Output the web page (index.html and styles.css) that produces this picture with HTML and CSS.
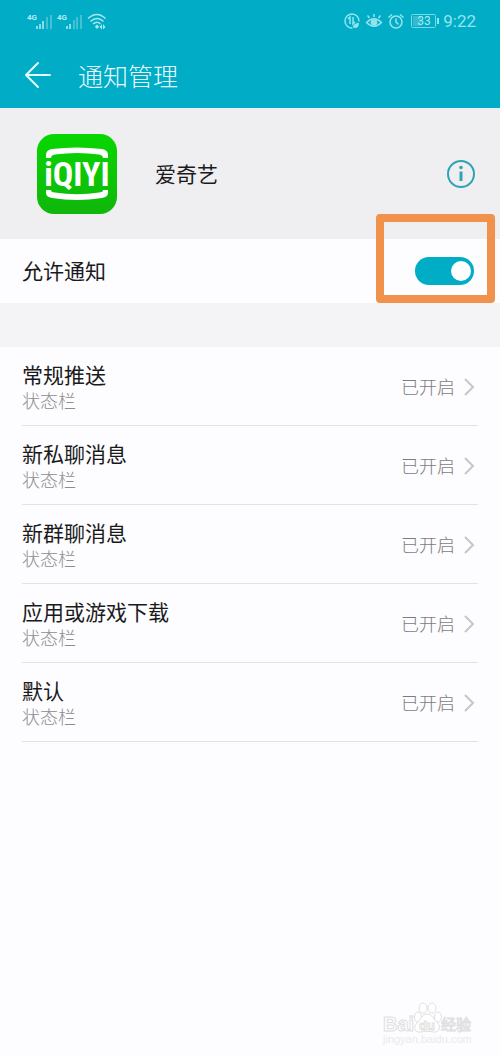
FILE: index.html
```html
<!DOCTYPE html>
<html lang="zh-CN">
<head>
<meta charset="utf-8">
<meta name="viewport" content="width=device-width, initial-scale=1">
<title>通知管理</title>
<link rel="stylesheet" href="styles.css">
</head>
<body>
<div class="screen">
  <header class="header">
    <div class="status-bar">
      <div class="status-left">
        <svg class="signal" width="26" height="18" viewBox="0 0 26 18" aria-hidden="true">
          <text class="net" x="0" y="8">4G</text>
          <path d="M10 17v-3M13 17v-5M16 17v-8" stroke="#b5edf4" stroke-width="1.500"/>
          <path d="M20 17V5M24 17V3" stroke="#45c1d3" stroke-width="2"/>
        </svg>
        <svg class="signal" width="26" height="18" viewBox="0 0 26 18" aria-hidden="true">
          <text class="net" x="0" y="8">4G</text>
          <path d="M10 17v-3M13 17v-5" stroke="#b5edf4" stroke-width="1.500"/>
          <path d="M17 17V8M20 17V5M24 17V3" stroke="#45c1d3" stroke-width="2"/>
        </svg>
        <svg width="20" height="18" viewBox="0 0 20 18" fill="none" stroke="#a5e8f0" stroke-width="1.600" aria-hidden="true">
          <path d="M1 6.500Q10-1.500 18.500 6.500M3.500 9.500Q10 3.500 16.500 9.500M6 12Q10 8.500 13.500 12"/>
          <path d="M10 12.500l2.200 2.200-2.200 2.300-2.200-2.300zM15 12l-2.500 3 2.500 2.500zM16 12l2.500 3-2.500 2.500z" fill="#a5e8f0" stroke="none"/>
        </svg>
      </div>
      <div class="status-right">
        <svg width="18" height="18" viewBox="0 0 18 18" fill="none" stroke="#94e4ee" stroke-width="1.500" aria-hidden="true">
          <path d="M16 9.500A7 7 0 1 0 9.500 16M5 7l2-2v7M10 5v7l2-2"/>
          <path d="M10 15.500c0-3 2.500-4.500 6-4.500 0 4-2.500 6-6 4.500z" fill="#94e4ee" stroke="none"/>
        </svg>
        <svg width="18" height="18" viewBox="0 0 18 18" fill="none" stroke="#94e4ee" stroke-width="1.500" aria-hidden="true">
          <path d="M1.500 10.500Q9 3 16.500 10.500Q9 18 1.500 10.500zM9 5V2M4.500 6L2.500 3.500M13.500 6l2-2.500"/>
          <circle cx="9" cy="10.500" r="2.600" fill="#94e4ee"/>
        </svg>
        <svg width="18" height="18" viewBox="0 0 18 18" fill="none" stroke="#94e4ee" stroke-width="1.600" aria-hidden="true">
          <circle cx="9" cy="10" r="6"/>
          <path d="M9 6.500V10l2.500 2.500M1.500 5.500L5 2.500M16.500 5.500L13 2.500"/>
        </svg>
        <svg class="battery" width="28" height="14" viewBox="0 0 28 14" aria-hidden="true">
          <rect x=".5" y=".5" width="24" height="13" rx="1" fill="none" stroke="#75dbe7"/>
          <rect x="2" y="2" width="8" height="10" fill="#35bace"/>
          <path d="M27 4v6" stroke="#94e4ee" stroke-width="2"/>
          <text class="battery-level" x="13" y="11" text-anchor="middle">33</text>
        </svg>
        <span class="clock">9:22</span>
      </div>
    </div>
    <div class="title-bar">
      <button class="back" type="button" aria-label="返回">
        <svg width="28" height="28" viewBox="0 0 28 28" fill="none" stroke="#e8fbfd" stroke-width="2" stroke-linecap="round" stroke-linejoin="round" aria-hidden="true">
          <path d="M26 14H2M14 2L2 14l12 12"/>
        </svg>
      </button>
      <h1 class="title">通知管理</h1>
    </div>
  </header>

  <main>
    <section class="app">
      <svg class="app-icon" width="80" height="80" viewBox="0 0 80 80" role="img" aria-label="爱奇艺">
        <defs>
          <linearGradient id="green" x1="0" y1="0" x2="0" y2="1">
            <stop offset="0" stop-color="#08d700"/>
            <stop offset="1" stop-color="#10b60c"/>
          </linearGradient>
        </defs>
        <rect width="80" height="80" rx="17" fill="url(#green)"/>
        <path d="M9 24V21Q9 16 15 15Q40 12 65 15Q71 16 71 21V24H66Q66 21 62 20.500Q40 17.500 18 20.500Q14 21 14 24z" fill="#fff"/>
        <path d="M9 56V59Q9 63 15 64Q40 68 65 64Q71 63 71 59V56H66Q66 58 62 58.500Q40 62 18 58.500Q14 58 14 56z" fill="#fff"/>
        <text class="logo-text" x="40" y="52" text-anchor="middle">iQIYI</text>
      </svg>
      <h2 class="app-name">爱奇艺</h2>
      <button class="info" type="button" aria-label="应用信息">
        <svg width="28" height="28" viewBox="0 0 28 28" aria-hidden="true">
          <circle cx="14" cy="14" r="13" fill="none" stroke="#2fa5b4" stroke-width="2"/>
          <circle cx="14" cy="7.500" r="1.800" fill="#2fa5b4"/>
          <path d="M14 11.500v9.500" stroke="#2fa5b4" stroke-width="3"/>
        </svg>
      </button>
    </section>

    <section class="allow">
      <label class="allow-label" for="allow">允许通知</label>
      <input class="switch" id="allow" type="checkbox" role="switch" checked>
      <span class="highlight"></span>
    </section>

    <ul class="channels">
      <li><a class="channel" href="#regular">
        <span class="channel-text"><span class="channel-name">常规推送</span><span class="channel-place">状态栏</span></span>
        <span class="channel-state">已开启</span>
        <svg class="chevron" width="12" height="20" viewBox="0 0 12 20" aria-hidden="true"><path d="M2 1l8 8-8 8"/></svg>
      </a></li>
      <li><a class="channel" href="#private">
        <span class="channel-text"><span class="channel-name">新私聊消息</span><span class="channel-place">状态栏</span></span>
        <span class="channel-state">已开启</span>
        <svg class="chevron" width="12" height="20" viewBox="0 0 12 20" aria-hidden="true"><path d="M2 1l8 8-8 8"/></svg>
      </a></li>
      <li><a class="channel" href="#group">
        <span class="channel-text"><span class="channel-name">新群聊消息</span><span class="channel-place">状态栏</span></span>
        <span class="channel-state">已开启</span>
        <svg class="chevron" width="12" height="20" viewBox="0 0 12 20" aria-hidden="true"><path d="M2 1l8 8-8 8"/></svg>
      </a></li>
      <li><a class="channel" href="#download">
        <span class="channel-text"><span class="channel-name">应用或游戏下载</span><span class="channel-place">状态栏</span></span>
        <span class="channel-state">已开启</span>
        <svg class="chevron" width="12" height="20" viewBox="0 0 12 20" aria-hidden="true"><path d="M2 1l8 8-8 8"/></svg>
      </a></li>
      <li><a class="channel" href="#default">
        <span class="channel-text"><span class="channel-name">默认</span><span class="channel-place">状态栏</span></span>
        <span class="channel-state">已开启</span>
        <svg class="chevron" width="12" height="20" viewBox="0 0 12 20" aria-hidden="true"><path d="M2 1l8 8-8 8"/></svg>
      </a></li>
    </ul>
  </main>

  <svg class="watermark" width="96" height="48" viewBox="0 0 96 48" role="img" aria-label="Baidu 经验 jingyan.baidu.com">
    <text class="mark-latin" x="1" y="31">Bai</text>
    <g fill="#fff" stroke="#e0dfe1">
      <ellipse cx="36" cy="17" rx="3.500" ry="5"/>
      <ellipse cx="41" cy="8" rx="4" ry="5"/>
      <ellipse cx="50" cy="8" rx="4" ry="5"/>
      <ellipse cx="56" cy="17" rx="3.500" ry="5"/>
      <path d="M45 14c-5 0-6 5-9 8-6 5-3 11 3 10 4-1 8-1 12 0 6 1 9-5 4-10-4-3-5-8-10-8z"/>
    </g>
    <text class="mark-du" x="45" y="30" text-anchor="middle">du</text>
    <text class="mark-cjk" x="59" y="30">经验</text>
    <text class="mark-url" x="1" y="43">jingyan.baidu.com</text>
  </svg>
</div>
</body>
</html>
```
FILE: styles.css
```css
* {
  box-sizing: border-box;
}

body {
  margin: 0;
  background: #fdfcfe;
  color: #1a1a1c;
  font-family: Roboto, "Noto Sans CJK SC", sans-serif;
}

button {
  display: flex;
  padding: 0;
  border: 0;
  background: none;
}

.screen {
  position: relative;
  min-height: 100vh;
}

.header {
  background: #00acc6;
}

.status-bar {
  display: flex;
  justify-content: space-between;
  align-items: center;
  height: 42px;
  padding: 0 24px 0 27px;
}

.status-left,
.status-right {
  display: flex;
  align-items: center;
  gap: 4px;
}

.net {
  fill: #b5edf4;
  font: bold 8px "Liberation Sans Narrow", Roboto, sans-serif;
}

.battery {
  margin-left: 2px;
}

.battery-level {
  fill: #a8eaf2;
  font: 12px Roboto, sans-serif;
}

.clock {
  color: #94e4ee;
  font-size: 17px;
  line-height: 20px;
}

.title-bar {
  display: flex;
  align-items: center;
  gap: 26px;
  height: 66px;
  padding: 0 24px;
}

.title {
  margin: 0;
  padding-top: 6px;
  color: #e8fbfd;
  font-size: 25px;
  font-weight: 300;
  line-height: 36px;
}

.app {
  display: flex;
  align-items: center;
  height: 131px;
  padding: 0 25px 0 37px;
  background: #efeef0;
}

.app-name {
  flex: 1;
  margin: 0 0 0 38px;
  padding-top: 2px;
  font-size: 21px;
  font-weight: 400;
  line-height: 30px;
}

.logo-text {
  fill: #fff;
  font: bold 34px "Liberation Sans Narrow", "Roboto Condensed", "Open Sans Condensed", sans-serif;
}

.allow {
  position: relative;
  display: flex;
  justify-content: space-between;
  align-items: center;
  height: 64px;
  padding: 0 26px 0 22px;
}

.allow-label {
  padding-top: 2px;
  font-size: 21px;
  line-height: 30px;
}

.switch {
  display: flex;
  align-items: center;
  justify-content: flex-start;
  width: 59px;
  height: 28px;
  margin: 0;
  padding: 0 3px;
  border-radius: 14px;
  background: #b9b9bd;
  appearance: none;
}

.switch::before {
  content: "";
  width: 20px;
  height: 20px;
  border-radius: 50%;
  background: #fff;
}

.switch:checked {
  justify-content: flex-end;
  background: #00acc6;
}

.highlight {
  position: absolute;
  top: -25px;
  right: 5px;
  width: 119px;
  height: 89px;
  border: 8px solid #f0924c;
  border-radius: 4px;
  pointer-events: none;
}

.channels {
  margin: 0;
  padding: 0 22px;
  border-top: 44px solid #f4f3f5;
  list-style: none;
}

.channel {
  display: flex;
  align-items: center;
  gap: 8px;
  padding: 16px 3px 10px 0;
  border-bottom: 1px solid #e2e1e4;
  color: inherit;
  text-decoration: none;
}

.channel-text {
  display: flex;
  flex: 1;
  flex-direction: column;
}

.channel-name {
  font-size: 21px;
  line-height: 26px;
}

.channel-place {
  color: #8d8c8f;
  font-size: 18px;
  font-weight: 300;
  line-height: 26px;
}

.channel-state {
  padding-bottom: 2px;
  color: #7c7b7e;
  font-size: 18px;
  font-weight: 300;
  line-height: 26px;
}

.chevron {
  margin-bottom: 2px;
  fill: none;
  stroke: #c6c5c8;
  stroke-width: 2;
}

.watermark {
  position: absolute;
  right: 22px;
  bottom: 9px;
}

.mark-latin,
.mark-cjk,
.mark-du {
  fill: #fff;
  stroke: #e0dfe1;
}

.mark-latin {
  font: bold 20px "Liberation Sans", sans-serif;
}

.mark-du {
  font: bold 13px "Liberation Sans", sans-serif;
}

.mark-cjk {
  font: 15px "Noto Sans CJK SC", sans-serif;
}

.mark-url {
  fill: #ebeaec;
  font: 11px "Liberation Sans", sans-serif;
}
```
